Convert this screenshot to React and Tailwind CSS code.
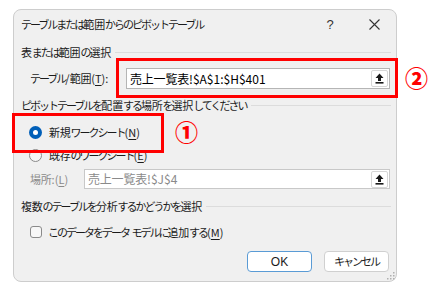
import React from "react";

const KANA = /[\u3040-\u30ff]/;
const KANJI = /[\u3400-\u9fff]/;

function J({ t }) {
  const parts = [];
  let cur = "";
  let type = null;
  const typeOf = (c) => (KANA.test(c) ? "k" : KANJI.test(c) ? "h" : "o");
  for (const c of t) {
    const ty = typeOf(c);
    if (ty !== type && cur) {
      parts.push([type, cur]);
      cur = "";
    }
    type = ty;
    cur += c;
  }
  if (cur) parts.push([type, cur]);
  return (
    <>
      {parts.map(([ty, s], i) =>
        ty === "k" ? (
          <span key={i} className="tracking-[-2px]">{s}</span>
        ) : ty === "h" ? (
          <span key={i} className="tracking-[-0.2px]">{s}</span>
        ) : (
          <span key={i}>{s}</span>
        )
      )}
    </>
  );
}

const UploadBtn = () => (
  <div className="flex h-[17px] w-[17px] items-center justify-center rounded-[2px] border border-[#d6d6d6] bg-white">
    <svg width="9" height="11" viewBox="0 0 9 11">
      <path d="M4.5 0.5 L8.5 5 L6 5 L6 8 L3 8 L3 5 L0.5 5 Z" fill="#1a1a1a" />
      <rect x="0.5" y="9" width="8" height="1.6" fill="#1a1a1a" />
    </svg>
  </div>
);

const SectionHeader = ({ children, className = "" }) => (
  <div className={"flex h-[16px] items-center pl-[7px] pr-[5px] " + className}>
    <span className="whitespace-nowrap">{children}</span>
    <div className="ml-[4px] h-px flex-1 bg-[#dcdcdc]" />
  </div>
);

export default function App() {
  return (
    <div className="relative h-[291px] w-[433px] overflow-hidden bg-white font-['Noto_Sans_CJK_JP','Noto_Sans',sans-serif] text-[11px] leading-none text-[#1b1b1b]">
      <div className="ml-[13px] mt-[9px] flex h-[273px] w-[384px] flex-col rounded-[8px] border border-[#cdcdcd] bg-[#f0f0f0]">
        {/* title */}
        <div className="flex h-[28px] items-center pl-[7px] pr-[7px]">
          <span className="flex-1 whitespace-nowrap">
            <J t="テーブルまたは範囲からのピボットテーブル" />
          </span>
          <span className="w-[30px] text-center text-[13px] font-['Liberation_Sans',sans-serif] text-[#333]">?</span>
          <span className="ml-[14px] flex w-[30px] justify-center">
            <svg width="11" height="11" viewBox="0 0 11 11">
              <path d="M0.5 0.5 L10.5 10.5 M10.5 0.5 L0.5 10.5" stroke="#333" strokeWidth="1.1" />
            </svg>
          </span>
        </div>

        <SectionHeader className="mt-[6px]">
          <J t="表または範囲の選択" />
        </SectionHeader>

        <div className="mt-[8px] flex h-[21px] items-center pr-[6px]">
          <span className="w-[112px] pl-[16px] whitespace-nowrap">
            <J t="テーブル/範囲(" />
            <u className="underline-offset-2">T</u>):
          </span>
          <div className="flex h-[21px] flex-1 items-center justify-between border border-[#b5b5b5] bg-white pl-[3px] pr-[1px]">
            <span className="text-[12px] text-black">
              <J t="売上一覧表!$A$1:$H$401" />
            </span>
            <UploadBtn />
          </div>
        </div>

        <SectionHeader className="mt-[8px]">
          <J t="ピボットテーブルを配置する場所を選択してください" />
        </SectionHeader>

        <div className="mt-[11px] flex h-[16px] items-center pl-[15px]">
          <span className="flex h-[13px] w-[13px] items-center justify-center rounded-full bg-[#005fb8]">
            <span className="h-[5px] w-[5px] rounded-full bg-white" />
          </span>
          <span className="ml-[7px]">
            <J t="新規ワークシート(" />
            <u className="underline-offset-2">N</u>)
          </span>
        </div>

        <div className="mt-[7px] flex h-[16px] items-center pl-[15px]">
          <span className="h-[13px] w-[13px] rounded-full border border-[#8a8a8a] bg-[#f7f7f7]" />
          <span className="ml-[7px]">
            <J t="既存のワークシート(" />
            <u className="underline-offset-2">E</u>)
          </span>
        </div>

        <div className="mt-[6px] flex h-[20px] items-center pr-[6px] text-[#8a8a8a]">
          <span className="w-[70px] pl-[16px] whitespace-nowrap">
            <J t="場所:(" />
            <u className="underline-offset-2">L</u>)
          </span>
          <div className="flex h-[20px] flex-1 items-center justify-between border border-[#c8c8c8] bg-white pl-[3px] pr-[1px]">
            <span className="text-[12px] text-[#8a8a8a]">
              <J t="売上一覧表!$J$4" />
            </span>
            <UploadBtn />
          </div>
        </div>

        <SectionHeader className="mt-[9px]">
          <J t="複数のテーブルを分析するかどうかを選択" />
        </SectionHeader>

        <div className="mt-[10px] flex h-[16px] items-center pl-[16px]">
          <span className="h-[12px] w-[12px] rounded-[3px] border border-[#8a8a8a] bg-[#f7f7f7]" />
          <span className="ml-[6px]">
            <J t="このデータをデータ モデルに追加する(" />
            <u className="underline-offset-2">M</u>)
          </span>
        </div>

        <div className="mt-[11px] flex items-center justify-end gap-[12px] pr-[7px]">
          <button className="flex h-[21px] w-[65px] items-center justify-center rounded-[4px] border border-[#5a9bd5] bg-white font-['Liberation_Sans',sans-serif] text-[12px]">
            OK
          </button>
          <button className="flex h-[21px] w-[65px] items-center justify-center rounded-[4px] border border-[#d0d0d0] bg-white">
            <J t="キャンセル" />
          </button>
        </div>

        <div className="mt-auto flex justify-end pb-[1px] pr-[1px]">
          <svg width="8" height="8" viewBox="0 0 8 8">
            <rect x="6" y="0" width="1.5" height="1.5" fill="#b0b0b0" />
            <rect x="3" y="3" width="1.5" height="1.5" fill="#b0b0b0" />
            <rect x="6" y="3" width="1.5" height="1.5" fill="#b0b0b0" />
            <rect x="0" y="6" width="1.5" height="1.5" fill="#b0b0b0" />
            <rect x="3" y="6" width="1.5" height="1.5" fill="#b0b0b0" />
            <rect x="6" y="6" width="1.5" height="1.5" fill="#b0b0b0" />
          </svg>
        </div>
      </div>

      {/* red highlight overlays */}
      <div className="absolute left-[116px] top-[58px] h-[40px] w-[282px] border-[3px] border-[#ff0000]" />
      <div className="absolute left-[12px] top-[113px] h-[40px] w-[152px] border-[3px] border-[#ff0000]" />
      <div className="absolute left-[405px] top-[66px] text-[23px] font-black leading-none text-[#ff0000]">②</div>
      <div className="absolute left-[175px] top-[120px] text-[23px] font-black leading-none text-[#ff0000]">①</div>
    </div>
  );
}
